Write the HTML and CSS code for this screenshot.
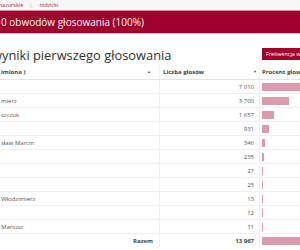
FILE: index.html
```html
<!DOCTYPE html>
<html lang="pl">
<head>
<meta charset="utf-8">
<link rel="stylesheet" href="styles.css">
</head>
<body>
<div class="crumbs"><span class="crumb cut1">mazurskie</span><span class="sep">|</span><span class="crumb">nidzicki</span></div>
<div class="banner"><span class="banner-text">0 obwodów głosowania (100%)</span></div>
<div class="titlebar">
  <h1 class="title">wyniki pierwszego głosowania</h1>
  <div class="btn">Frekwencja w obwodach</div>
</div>
<div class="table">
  <div class="row head">
    <div class="c name">imiona )<span class="arrow">▲</span></div>
    <div class="c votes"><span class="hl">Liczba głosów</span><span class="arrow">▼</span></div>
    <div class="c pct">Procent głosów</div>
  </div>
  <div class="row"><div class="c name"></div><div class="c votes">7 010</div><div class="c pct"><div class="track"><div class="bar" style="width:50.19%"></div></div></div></div>
  <div class="row"><div class="c name">mierz</div><div class="c votes">3 700</div><div class="c pct"><div class="track"><div class="bar" style="width:26.49%"></div></div></div></div>
  <div class="row"><div class="c name">szczuk</div><div class="c votes">1 657</div><div class="c pct"><div class="track"><div class="bar" style="width:11.86%"></div></div></div></div>
  <div class="row"><div class="c name"></div><div class="c votes">931</div><div class="c pct"><div class="track"><div class="bar" style="width:6.67%"></div></div></div></div>
  <div class="row"><div class="c name">sław Marcin</div><div class="c votes">346</div><div class="c pct"><div class="track"><div class="bar" style="width:2.48%"></div></div></div></div>
  <div class="row"><div class="c name"></div><div class="c votes">235</div><div class="c pct"><div class="track"><div class="bar" style="width:1.68%"></div></div></div></div>
  <div class="row"><div class="c name"></div><div class="c votes">27</div><div class="c pct"><div class="track"><div class="bar" style="width:0.19%"></div></div></div></div>
  <div class="row"><div class="c name"></div><div class="c votes">25</div><div class="c pct"><div class="track"><div class="bar" style="width:0.18%"></div></div></div></div>
  <div class="row"><div class="c name">Włodzimierz</div><div class="c votes">13</div><div class="c pct"><div class="track"><div class="bar" style="width:0.09%"></div></div></div></div>
  <div class="row"><div class="c name"></div><div class="c votes">12</div><div class="c pct"><div class="track"><div class="bar" style="width:0.09%"></div></div></div></div>
  <div class="row"><div class="c name">Mariusz</div><div class="c votes">11</div><div class="c pct"><div class="track"><div class="bar" style="width:0.08%"></div></div></div></div>
  <div class="row total"><div class="c name">Razem</div><div class="c votes">13 967</div><div class="c pct"><div class="track"><div class="bar" style="width:100%"></div></div></div></div>
</div>
</body>
</html>
```
FILE: styles.css
```css
html, body {
  margin: 0;
  padding: 0;
  width: 300px;
  height: 250px;
  overflow: hidden;
  background: #fff;
  font-family: "Open Sans", "Liberation Sans", sans-serif;
  color: #555;
}
.crumbs {
  height: 10px;
  background: #f7f7f7;
  display: flex;
  align-items: center;
  font-size: 5.5px;
  color: #a3284a;
  white-space: nowrap;
}
.cut1 { margin-left: -3px; }
.sep { color: #999; margin: 0 7px 0 6px; }
.banner {
  height: 22px;
  background: #a1002b;
  border-top: 1px solid #d98ea3;
  border-bottom: 1px solid #e7b5c3;
  display: flex;
  align-items: center;
  color: #fff;
  font-size: 10px;
  white-space: nowrap;
  padding-left: 1px;
}
.titlebar {
  display: flex;
  justify-content: space-between;
  align-items: flex-start;
  padding-top: 13px;
  height: 17px;
  white-space: nowrap;
}
.title {
  margin: 0 0 0 -8px;
  font-size: 12.9px;
  font-weight: 400;
  color: #333;
  line-height: 17px;
}
.btn {
  margin-top: 1px;
  background: #a1002b;
  color: #fff;
  font-size: 5.5px;
  height: 12px;
  line-height: 12px;
  padding: 0 4px;
  width: 40px;
  overflow: hidden;
  flex: none;
  margin-right: -10px;
}
.table {
  display: flex;
  flex-direction: column;
  margin-top: 1px;
}
.row {
  display: grid;
  grid-template-columns: 159px 100px 120px;
  height: 13px;
  border-bottom: 1px solid #f0f0f0;
  font-size: 6px;
  white-space: nowrap;
}
.row.head {
  height: 14px;
  border-bottom: 1px solid #e3e3e3;
  font-weight: 700;
  color: #444;
}
.c {
  display: flex;
  align-items: center;
  overflow: hidden;
}
.name { padding-left: 1px; }
.votes {
  border-left: 1px solid #eee;
  justify-content: flex-end;
  padding-right: 5px;
}
.pct {
  border-left: 1px solid #eee;
  padding-left: 2px;
}
.head .votes { justify-content: space-between; padding-left: 3px; padding-right: 2px; }
.head .name { justify-content: space-between; padding-right: 8px; }
.arrow { font-size: 4px; color: #555; align-self: flex-start; margin-top: 4px; }
.track { width: 102px; height: 8px; }
.bar { height: 100%; min-width: 1px; background: #dc9aad; }
.total { font-weight: 700; color: #444; border-bottom: none; }
.total .name { justify-content: flex-end; padding-right: 6px; }
```
